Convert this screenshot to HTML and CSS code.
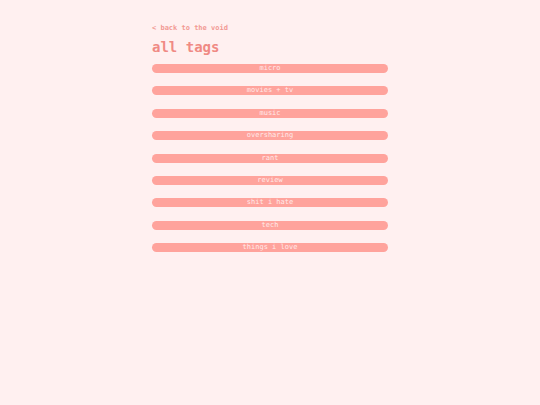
FILE: index.html
```html
<!DOCTYPE html>
<html>
<head>
<meta charset="utf-8">
<link rel="stylesheet" href="styles.css">
</head>
<body>
<main class="page">
  <a class="back" href="#">&lt; back to the void</a>
  <h1 class="title">all tags</h1>
  <ul class="tags">
    <li><a class="tag" href="#">micro</a></li>
    <li><a class="tag" href="#">movies + tv</a></li>
    <li><a class="tag" href="#">music</a></li>
    <li><a class="tag" href="#">oversharing</a></li>
    <li><a class="tag" href="#">rant</a></li>
    <li><a class="tag" href="#">review</a></li>
    <li><a class="tag" href="#">shit i hate</a></li>
    <li><a class="tag" href="#">tech</a></li>
    <li><a class="tag" href="#">things i love</a></li>
  </ul>
</main>
</body>
</html>
```

FILE: styles.css
```css
html, body {
  margin: 0;
  padding: 0;
  background: #fff0f0;
  font-family: "DejaVu Sans Mono", "Liberation Mono", monospace;
}
.page {
  width: 236px;
  margin: 0 auto;
  padding-top: 24px;
  display: flex;
  flex-direction: column;
}
.back {
  font-size: 7px;
  font-weight: bold;
  color: #f29a94;
  text-decoration: none;
  line-height: 9px;
}
.title {
  margin: 6px 0 0 0;
  font-size: 14px;
  line-height: 17px;
  font-weight: bold;
  color: #f08a84;
}
.tags {
  list-style: none;
  margin: 8px 0 0 0;
  padding: 0;
  display: flex;
  flex-direction: column;
  gap: 13.4px;
}
.tag {
  display: block;
  height: 9px;
  line-height: 9px;
  border-radius: 5px;
  background: #ffa39c;
  color: #ffe9e9;
  font-size: 7px;
  text-align: center;
  text-decoration: none;
}
```
